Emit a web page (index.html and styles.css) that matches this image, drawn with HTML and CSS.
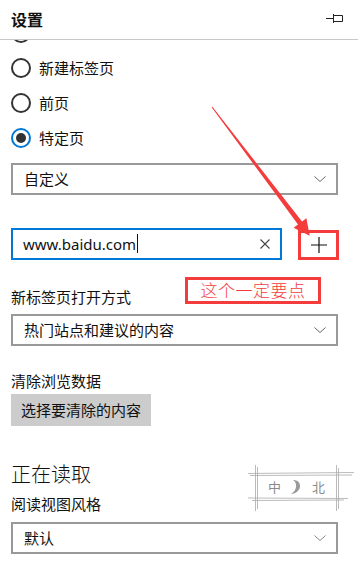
FILE: index.html
```html
<!DOCTYPE html>
<html lang="zh">
<head>
<meta charset="utf-8">
<title>设置</title>
<link rel="stylesheet" href="styles.css">
</head>
<body>
<div class="panel">
  <header class="header">
    <h1 class="title">设置</h1>
    <svg class="pin" width="18" height="12" viewBox="0 0 18 12">
      <path d="M0 5.5H7M7.5 1V10M8 2.5H16.5V8.5H8" fill="none" stroke="#222" stroke-width="1"/>
    </svg>
  </header>
  <main class="content">
    <div class="radios">
      <div class="radio-row"><span class="radio"></span></div>
      <div class="radio-row"><span class="radio"></span><span class="radio-label">新建标签页</span></div>
      <div class="radio-row"><span class="radio"></span><span class="radio-label">前页</span></div>
      <div class="radio-row"><span class="radio checked"></span><span class="radio-label">特定页</span></div>
    </div>

    <div class="select first-select">
      <span>自定义</span>
      <svg class="chev" width="14" height="8" viewBox="0 0 14 8"><path d="M1.5 1.5L7 6.5L12.5 1.5" fill="none" stroke="#666" stroke-width="1"/></svg>
    </div>

    <div class="url-row">
      <div class="input">
        <span class="input-text">www.baidu.com</span><span class="caret"></span>
        <svg class="clear" width="12" height="12" viewBox="0 0 12 12"><path d="M1.5 1.5L10.5 10.5M10.5 1.5L1.5 10.5" fill="none" stroke="#444" stroke-width="1.1"/></svg>
      </div>
      <div class="add-btn">
        <svg width="16" height="16" viewBox="0 0 16 16"><path d="M8 0V16M0 8H16" fill="none" stroke="#111" stroke-width="1.2"/></svg>
      </div>
    </div>

    <div class="label label-newtab">新标签页打开方式</div>
    <div class="select">
      <span>热门站点和建议的内容</span>
      <svg class="chev" width="14" height="8" viewBox="0 0 14 8"><path d="M1.5 1.5L7 6.5L12.5 1.5" fill="none" stroke="#666" stroke-width="1"/></svg>
    </div>

    <div class="label label-clear">清除浏览数据</div>
    <div class="gray-btn">选择要清除的内容</div>

    <h2 class="section">正在读取</h2>
    <div class="label label-style">阅读视图风格</div>
    <div class="select">
      <span>默认</span>
      <svg class="chev" width="14" height="8" viewBox="0 0 14 8"><path d="M1.5 1.5L7 6.5L12.5 1.5" fill="none" stroke="#888" stroke-width="1"/></svg>
    </div>
  </main>

  <div class="note">这个一定要点</div>

  <svg class="arrow" width="361" height="566" viewBox="0 0 361 566">
    <polygon points="211.6,107.3 212.4,106.7 302,221.5 306.4,218.2 309.7,235.8 293.6,227.8 298,224.5" fill="#f43c3c"/>
  </svg>

  <div class="ime">
    <svg width="106" height="46" viewBox="0 0 106 46">
      <g fill="none" stroke="#aaa" stroke-width="0.8">
        <path d="M0 8.5L106 7.5M2 10.5L104 10"/>
        <path d="M0 33L100 33.5M4 35.5L96 35"/>
        <path d="M7.5 0V46M9.5 2V44"/>
        <path d="M88.5 0V46M90.5 3V44"/>
      </g>
      <path d="M45 15 C49 17 50 25 43 29 C48 29 52 25 52 21 C52 17 49 15 45 15Z" fill="#9a9a9a"/>
    </svg>
    <span class="ime-zh">中</span>
    <span class="ime-p">北</span>
  </div>
</div>
</body>
</html>
```

FILE: styles.css
```css
* { box-sizing: border-box; margin: 0; padding: 0; }
html, body {
  width: 361px;
  height: 566px;
  overflow: hidden;
  background: #fff;
}
body {
  font-family: "Noto Sans CJK SC", "Noto Sans", sans-serif;
  color: #111;
  font-size: 15px;
}
.panel {
  position: relative;
  width: 361px;
  height: 566px;
}
.header {
  height: 40px;
  width: 358px;
  border-bottom: 1px solid #c8c8c8;
  display: flex;
  align-items: center;
  justify-content: space-between;
  padding: 0 14px 2px 11px;
}
.title {
  font-size: 16px;
  font-weight: 700;
  line-height: 20px;
  color: #111;
}
.pin { display: block; margin-top: 1px; }

.content {
  height: 526px;
  overflow: hidden;
  padding-left: 11px;
}
.radios { margin-top: -25px; }
.radio-row {
  height: 35px;
  display: flex;
  align-items: center;
  gap: 8px;
}
.radio {
  width: 20px;
  height: 20px;
  border: 2px solid #333;
  border-radius: 50%;
  display: flex;
  align-items: center;
  justify-content: center;
}
.radio.checked { border-color: #0078d7; }
.radio.checked::after {
  content: "";
  width: 10px;
  height: 10px;
  border-radius: 50%;
  background: #333;
}
.radio-label { line-height: 20px; }

.select {
  width: 327px;
  height: 32px;
  border: 2px solid #999;
  display: flex;
  align-items: center;
  justify-content: space-between;
  padding: 0 9px 0 11px;
  line-height: 20px;
}
.first-select { margin-top: 8px; }
.chev { display: block; }

.url-row {
  margin-top: 32px;
  display: flex;
  align-items: center;
  gap: 16px;
}
.input {
  width: 271px;
  height: 32px;
  border: 2px solid #0078d7;
  display: flex;
  align-items: center;
  padding: 0 9px 0 10px;
}
.input-text {
  font-family: "Noto Sans", sans-serif;
  font-size: 15px;
  line-height: 20px;
  color: #111;
}
.caret {
  width: 1px;
  height: 19px;
  background: #111;
  margin-left: 1px;
}
.clear { margin-left: auto; display: block; }
.add-btn {
  width: 41px;
  height: 30px;
  border: 3px solid #f43c3c;
  display: flex;
  align-items: center;
  justify-content: center;
  margin-top: 3px;
}
.add-btn svg { display: block; }

.label { line-height: 20px; }
.label-newtab { margin-top: 27px; margin-bottom: 7px; }
.label-clear { margin-top: 25px; margin-bottom: 3px; }
.label-style { margin-top: 6px; margin-bottom: 8px; }

.gray-btn {
  display: inline-flex;
  align-items: center;
  height: 32px;
  width: 140px;
  padding-left: 10px;
  background: #ccc;
  line-height: 20px;
}
.section {
  margin-top: 34px;
  font-size: 20px;
  font-weight: 300;
  line-height: 28px;
  color: #111;
}

.note {
  position: absolute;
  left: 185px;
  top: 277px;
  width: 136px;
  height: 27px;
  border: 3px solid #f43c3c;
  color: #f43c3c;
  font-size: 17px;
  line-height: 20px;
  text-align: center;
  font-weight: 300;
  letter-spacing: 0.5px;
}
.arrow {
  position: absolute;
  left: 0;
  top: 0;
  pointer-events: none;
}
.ime {
  position: absolute;
  left: 248px;
  top: 465px;
  width: 106px;
  height: 46px;
}
.ime svg { position: absolute; left: 0; top: 0; }
.ime-zh, .ime-p {
  position: absolute;
  top: 14px;
  font-size: 13px;
  line-height: 16px;
  color: #8a8a8a;
}
.ime-zh { left: 20px; }
.ime-p { left: 64px; }
```
